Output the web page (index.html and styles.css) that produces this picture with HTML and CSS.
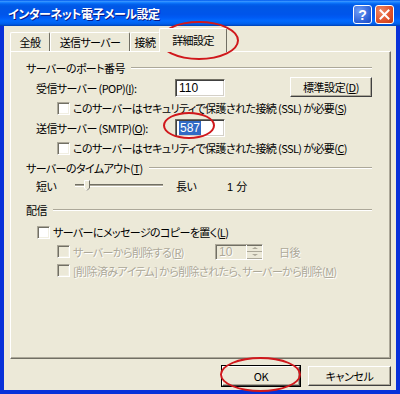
FILE: index.html
```html
<!DOCTYPE html>
<html lang="ja">
<head>
    <meta charset="UTF-8">
    <meta name="viewport" content="width=device-width, initial-scale=1.0">
    <title>インターネット電子メール設定</title>
    <link rel="stylesheet" href="styles.css">
</head>
<body>

<div class="window">
    <!-- barre de titre -->
    <div class="titlebar">
        <span class="title">インターネット電子メール設定</span>
        <div class="title-btns">
            <span class="tbtn help">?</span>
            <span class="tbtn close">
                <svg width="11" height="11" viewBox="0 0 11 11"><path d="M1.5 1.5 L9.5 9.5 M9.5 1.5 L1.5 9.5" stroke="#fff" stroke-width="2" stroke-linecap="square"/></svg>
            </span>
        </div>
    </div>

    <div class="client">
        <div class="tabs">
            <span class="tab">全般</span>
            <span class="tab">送信サーバー</span>
            <span class="tab">接続</span>
            <span class="tab active">詳細設定</span>
        </div>

        <div class="panel">
            <div class="row head"><span>サーバーのポート番号</span><span class="sep"></span></div>

            <div class="row pad1">
                <label class="field-label">受信サーバー (POP)(<u>I</u>):</label>
                <span class="input">110</span>
                <button class="btn std">標準設定(<u>D</u>)</button>
            </div>
            <div class="row pad2">
                <span class="check"></span>
                <span>このサーバーはセキュリティで保護された接続 (SSL) が必要(<u>S</u>)</span>
            </div>

            <div class="row pad1">
                <label class="field-label">送信サーバー (SMTP)(<u>O</u>):</label>
                <span class="input"><span class="selected">587</span></span>
            </div>
            <div class="row pad2">
                <span class="check"></span>
                <span>このサーバーはセキュリティで保護された接続 (SSL) が必要(<u>C</u>)</span>
            </div>

            <div class="row head"><span>サーバーのタイムアウト(<u>T</u>)</span><span class="sep"></span></div>
            <div class="row pad1 short">
                <span class="short-label">短い</span>
                <div class="slider">
                    <span class="track"></span>
                    <svg class="thumb" width="6" height="11" viewBox="0 0 6 11">
                        <path d="M0.5 0.5 H5.5 V8 L3 10.5 L0.5 8 Z" fill="#ece9d8" stroke="#fff"/>
                        <path d="M5.5 0.5 V8 L3 10.5" fill="none" stroke="#716f64"/>
                    </svg>
                </div>
                <span class="long-label">長い</span>
                <span class="minutes">1 分</span>
            </div>

            <div class="row head gap"><span>配信</span><span class="sep"></span></div>
            <div class="row copy">
                <span class="check"></span>
                <span>サーバーにメッセージのコピーを置く(<u>L</u>)</span>
            </div>
            <div class="row pad2 disabled h19">
                <span class="check"></span>
                <span class="del-label">サーバーから削除する(<u>R</u>)</span>
                <span class="spin">
                    <span class="spin-val">10</span>
                    <span class="spin-arrows">
                        <span class="arr up"></span>
                        <span class="arr down"></span>
                    </span>
                </span>
                <span class="days">日後</span>
            </div>
            <div class="row pad2 disabled h19">
                <span class="check"></span>
                <span>[削除済みアイテム] から削除されたら、サーバーから削除(<u>M</u>)</span>
            </div>
        </div>

        <div class="buttons">
            <button class="btn ok">OK</button>
            <button class="btn cancel">キャンセル</button>
        </div>
    </div>

    <!-- cercles rouges -->
    <span class="mark mark-tab"></span>
    <span class="mark mark-smtp"></span>
    <span class="mark mark-ok"></span>
</div>

</body>
</html>
```

FILE: styles.css
```css
body {
    margin: 0;
    font-family: "Noto Sans CJK JP", "Liberation Sans", sans-serif;
    font-size: 11px;
    letter-spacing: -0.6px;
    font-feature-settings: "palt";
    color: #000;
}
.window {
    position: relative;
    width: 400px;
    height: 394px;
    background: #0831d9;
    display: flex;
    flex-direction: column;
    overflow: hidden;
}
.titlebar {
    height: 26px;
    display: flex;
    align-items: center;
    justify-content: space-between;
    padding: 0 6px 0 8px;
    background: linear-gradient(to bottom, #0058ee 0%, #3593ff 6%, #127dff 10%, #0262ee 16%, #0057e5 24%, #0055eb 56%, #005bf5 68%, #026afe 80%, #0062ef 90%, #0052d6 96%, #0040ab 100%);
}
.title {
    color: #fff;
    font-weight: bold;
    font-size: 12px;
    text-shadow: 1px 1px #0a1883;
    letter-spacing: -0.5px;
}
.title-btns {
    display: flex;
    gap: 3px;
    margin-top: 3px;
}
.tbtn {
    width: 17px;
    height: 17px;
    border: 1px solid #fff;
    border-radius: 3px;
    display: flex;
    align-items: center;
    justify-content: center;
    color: #fff;
    font-family: "Liberation Sans", sans-serif;
    font-weight: bold;
    font-size: 14px;
    letter-spacing: 0;
}
.help {
    background: radial-gradient(circle at 30% 30%, #6f9cf6, #2b5fd6 70%, #1d48c2);
}
.close {
    background: radial-gradient(circle at 30% 30%, #f08a66, #e0512a 60%, #c23a14);
}
.client {
    flex: 1;
    margin: 0 4px 4px 4px;
    background: #ece9d8;
    padding: 0 5px 0 6px;
    display: flex;
    flex-direction: column;
}
.tabs {
    display: flex;
    align-items: flex-end;
    height: 25px;
    position: relative;
    z-index: 1;
}
.tab {
    height: 19px;
    padding: 0;
    display: flex;
    align-items: center;
    justify-content: center;
    white-space: nowrap;
    border-top: 1px solid #fff;
    border-left: 1px solid #fff;
    border-right: 1px solid #716f64;
    border-radius: 2px 2px 0 0;
    box-sizing: border-box;
}
.tab:nth-child(1) { width: 40px; }
.tab:nth-child(2) { width: 80px; }
.tab:nth-child(3) { width: 30px; }
.tab.active {
    width: 68px;
    height: 24px;
    margin-left: -1px;
    background: #ece9d8;
    margin-bottom: -1px;
    padding-bottom: 2px;
}
.panel {
    height: 308px;
    box-sizing: border-box;
    border-top: 1px solid #fff;
    border-left: 1px solid #fff;
    border-right: 1px solid #716f64;
    border-bottom: 1px solid #716f64;
    box-shadow: inset -1px -1px 0 #aca899;
    padding: 6px 18px 0 15px;
}
.row {
    display: flex;
    align-items: center;
    height: 20px;
    white-space: nowrap;
}
.head .sep {
    flex: 1;
    margin-left: 6px;
    height: 0;
    border-top: 1px solid #aca899;
    border-bottom: 1px solid #fff;
}
.head.gap { margin-top: 6px; }
.pad1 { padding-left: 10px; }
.pad2 { padding-left: 31px; }
.copy { padding-left: 11px; margin-top: 2px; }
.short { height: 16px; }
.h19 { height: 19px; }
.field-label {
    width: 139px;
}
.input {
    width: 50px;
    height: 18px;
    box-sizing: border-box;
    background: #fff;
    border-top: 1px solid #716f64;
    border-left: 1px solid #716f64;
    border-right: 1px solid #fff;
    border-bottom: 1px solid #fff;
    box-shadow: inset 1px 1px 0 #404040, inset -1px -1px 0 #d4d0c8;
    padding: 0 2px 0 3px;
    font-family: "Liberation Sans", sans-serif;
    font-size: 12px;
    letter-spacing: 0;
    line-height: 16px;
}
.selected {
    background: #316ac5;
    color: #fff;
    padding: 0 1px;
}
.btn {
    font-family: inherit;
    font-size: 11px;
    letter-spacing: -0.4px;
    font-feature-settings: "palt";
    color: #000;
    background: #ece9d8;
    border-top: 1px solid #fff;
    border-left: 1px solid #fff;
    border-right: 1px solid #404040;
    border-bottom: 1px solid #404040;
    box-shadow: inset -1px -1px 0 #aca899;
    padding: 0;
    height: 20px;
}
.std {
    width: 82px;
    margin-left: auto;
    margin-top: -2px;
}
.check {
    width: 13px;
    height: 13px;
    box-sizing: border-box;
    background: #fff;
    border-top: 1px solid #aca899;
    border-left: 1px solid #aca899;
    border-right: 1px solid #fff;
    border-bottom: 1px solid #fff;
    box-shadow: inset 1px 1px 0 #716f64, inset -1px -1px 0 #f1efe2;
    margin-right: 3px;
    flex-shrink: 0;
}
.disabled {
    color: #aca899;
    text-shadow: 1px 1px 0 #fff;
}
.disabled .check {
    background: #ece9d8;
}
.short-label { width: 39px; }
.slider {
    position: relative;
    width: 88px;
    height: 14px;
    display: flex;
    align-items: center;
}
.track {
    width: 100%;
    height: 0;
    border-top: 1px solid #aca899;
    border-bottom: 1px solid #fff;
    box-shadow: 0 -1px 0 #716f64;
}
.thumb {
    position: absolute;
    left: 9px;
    top: 1px;
}
.long-label { margin-left: 13px; width: 51px; }
.minutes { font-family: "Liberation Sans", "Noto Sans CJK JP", sans-serif; letter-spacing: 0; }
.del-label { width: 142px; }
.spin {
    width: 48px;
    height: 16px;
    box-sizing: border-box;
    display: flex;
    border-top: 1px solid #aca899;
    border-left: 1px solid #aca899;
    border-right: 1px solid #fff;
    border-bottom: 1px solid #fff;
    box-shadow: inset 1px 1px 0 #716f64;
    background: #ece9d8;
}
.spin-val {
    flex: 1;
    padding-left: 3px;
    font-family: "Liberation Sans", sans-serif;
    font-size: 12px;
    letter-spacing: 0;
    line-height: 14px;
}
.spin-arrows {
    width: 15px;
    display: flex;
    flex-direction: column;
    border-left: 1px solid #fff;
}
.arr {
    flex: 1;
    border-bottom: 1px solid #aca899;
    position: relative;
}
.arr::after {
    content: "";
    position: absolute;
    left: 5px;
    top: 2px;
    border-left: 3px solid transparent;
    border-right: 3px solid transparent;
}
.arr.up::after { border-bottom: 2px solid #aca899; }
.arr.down::after { border-top: 2px solid #aca899; }
.days { margin-left: 16px; }
.buttons {
    display: flex;
    justify-content: flex-end;
    gap: 8px;
    margin-top: 7px;
}
.ok {
    width: 78px;
    outline: 1px solid #000;
}
.cancel {
    width: 83px;
}
.mark {
    position: absolute;
    border: 2px solid #d0181c;
    border-radius: 50%;
    box-sizing: border-box;
}
.mark-tab { left: 159px; top: 21px; width: 80px; height: 39px; }
.mark-smtp { left: 163px; top: 112px; width: 52px; height: 27px; }
.mark-ok { left: 220px; top: 357px; width: 81px; height: 35px; }
```
